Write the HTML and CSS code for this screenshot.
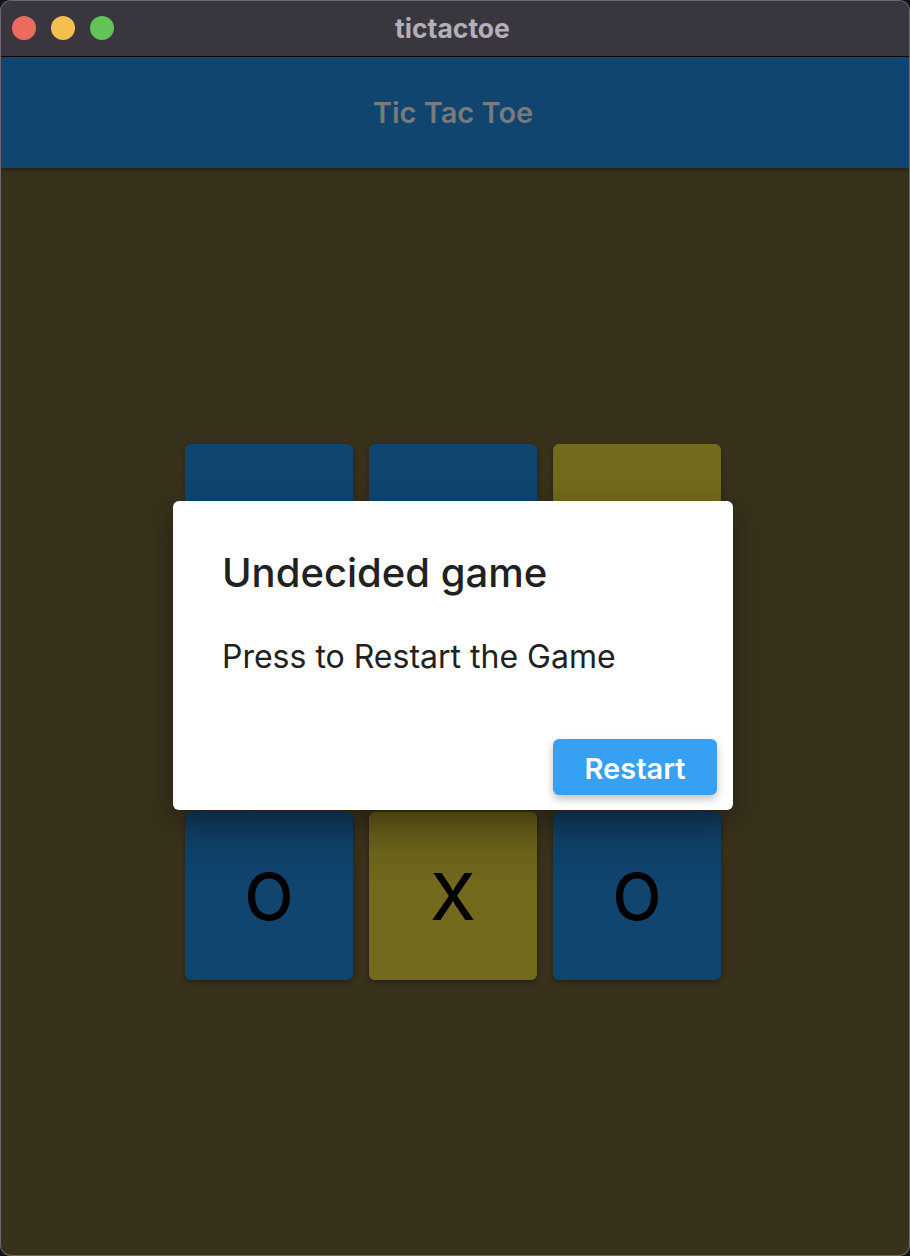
FILE: index.html
```html
<!DOCTYPE html>
<html>
<head>
<meta charset="utf-8">
<link rel="stylesheet" href="styles.css">
</head>
<body>
<div class="window">
  <div class="titlebar">
    <div class="lights">
      <span class="light red"></span>
      <span class="light yellow"></span>
      <span class="light green"></span>
    </div>
    <div class="wtitle">tictactoe</div>
  </div>
  <div class="appbar"><span class="atitle">Tic Tac Toe</span></div>
  <div class="content">
    <div class="board">
      <div class="cell blue"></div>
      <div class="cell blue"></div>
      <div class="cell olive"></div>
      <div class="cell blue"></div>
      <div class="cell olive"></div>
      <div class="cell blue"></div>
      <div class="cell blue">O</div>
      <div class="cell olive">X</div>
      <div class="cell blue">O</div>
    </div>
    <div class="dialog">
      <div class="dtitle">Undecided game</div>
      <div class="dtext">Press to Restart the Game</div>
      <div class="actions">
        <button class="btn">Restart</button>
      </div>
    </div>
  </div>
</div>
</body>
</html>
```

FILE: styles.css
```css
html, body {
  margin: 0;
  padding: 0;
  width: 910px;
  height: 1256px;
  background: #15141a;
  overflow: hidden;
}
.window {
  width: 910px;
  height: 1256px;
  box-sizing: border-box;
  border-radius: 11px;
  overflow: hidden;
  display: flex;
  flex-direction: column;
  background: #38311b;
  border: 1px solid #6b6870;
  border-bottom-color: #6e6a55;
}
.titlebar {
  height: 55px;
  flex: none;
  background: #3a3640;
  border-bottom: 1px solid #0b0b0d;
  position: relative;
  display: flex;
  align-items: center;
  justify-content: center;
}
.lights {
  position: absolute;
  left: 11px;
  top: 15px;
  display: flex;
  gap: 15px;
}
.light {
  width: 24px;
  height: 24px;
  border-radius: 50%;
  display: block;
}
.red { background: #ed6a5e; }
.yellow { background: #f5bf4f; }
.green { background: #61c454; }
.wtitle {
  font-family: "Inter", "Liberation Sans", sans-serif;
  font-weight: 700;
  font-size: 26.5px;
  color: #b2afb6;
  margin-top: -2px;
  margin-right: 5px;
}
.appbar {
  height: 111px;
  flex: none;
  background: #10456f;
  display: flex;
  align-items: center;
  justify-content: center;
  box-shadow: 0 2px 4px rgba(0,0,0,0.35);
  position: relative;
  z-index: 1;
}
.atitle {
  font-family: "Inter", "Liberation Sans", sans-serif;
  font-weight: 600;
  font-size: 29px;
  color: #7a7a7a;
  margin-right: 4px;
}
.content {
  flex: 1;
  position: relative;
  display: flex;
  align-items: center;
  justify-content: center;
}
.board {
  display: grid;
  grid-template-columns: repeat(3, 168px);
  grid-auto-rows: 168px;
  gap: 16px;
  margin-left: -4px;
}
.cell {
  border-radius: 6px;
  display: flex;
  align-items: center;
  justify-content: center;
  font-family: "Inter", "Liberation Sans", sans-serif;
  font-size: 64px;
  font-weight: 500;
  color: #000;
  box-shadow: 0 2px 5px rgba(0,0,0,0.35);
  padding-top: 2px;
  box-sizing: border-box;
}
.blue { background: linear-gradient(#0e3a5c, #10456f 45%); }
.olive { background: linear-gradient(#5f5618, #736a1d 45%); }
.board .cell.blue:nth-child(-n+3) { background: #10456f; }
.board .cell.olive:nth-child(-n+3) { background: #736a1d; }
.dialog {
  position: absolute;
  left: 172px;
  top: 333px;
  width: 560px;
  height: 309px;
  box-sizing: border-box;
  background: #fff;
  border-radius: 6px;
  padding: 46px 16px 15px 49px;
  display: flex;
  flex-direction: column;
  font-family: "Inter", "Liberation Sans", sans-serif;
  color: #212121;
  box-shadow: 0 10px 30px rgba(0,0,0,0.35);
}
.dtitle {
  font-size: 40px;
  font-weight: 500;
  line-height: 52px;
}
.dtext {
  font-size: 32px;
  line-height: 40px;
  margin-top: 38px;
}
.actions {
  margin-top: auto;
  display: flex;
  justify-content: flex-end;
}
.btn {
  width: 164px;
  height: 56px;
  border: none;
  border-radius: 6px;
  background: #35a0f4;
  color: #fff;
  font-family: "Inter", "Liberation Sans", sans-serif;
  font-size: 29px;
  font-weight: 600;
  box-shadow: 0 4px 8px rgba(0,0,0,0.25);
  padding: 3px 0 0 0;
}
```
